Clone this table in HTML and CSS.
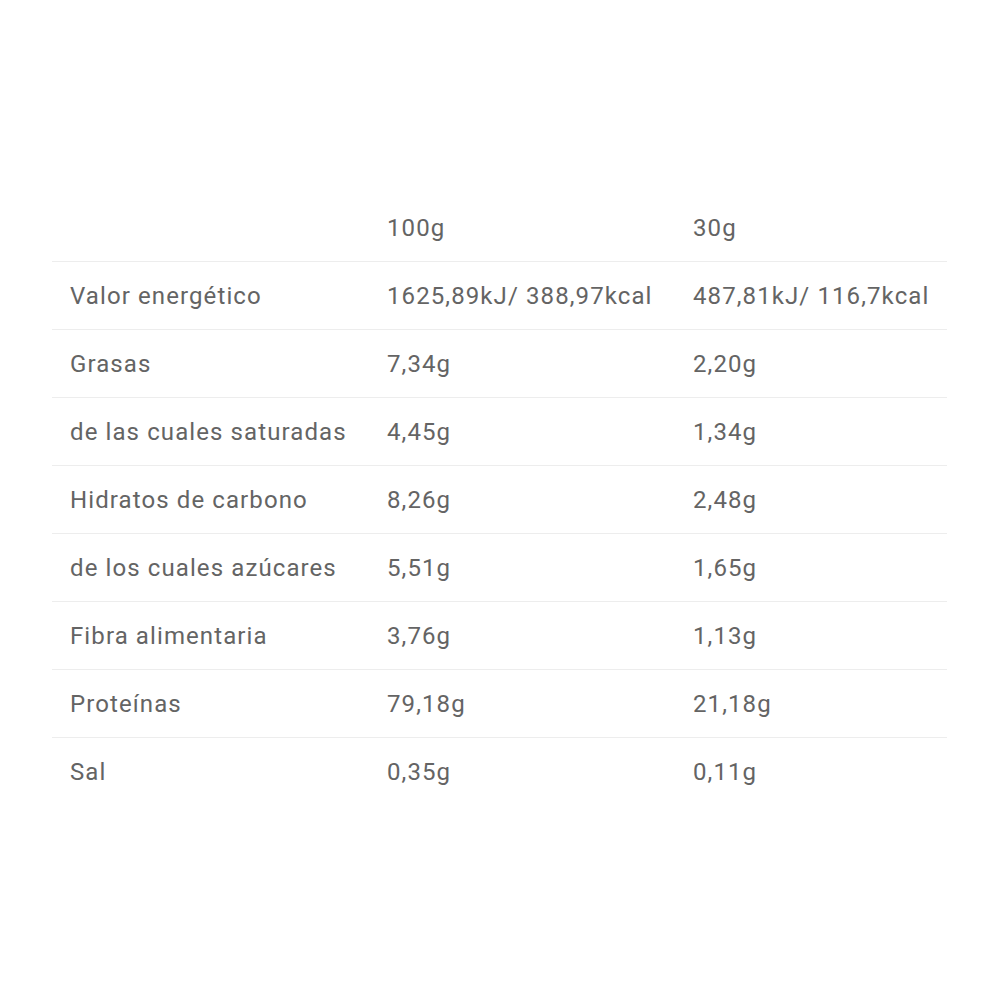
FILE: index.html
```html
<!DOCTYPE html>
<html lang="es">
<head>
<meta charset="utf-8">
<link rel="stylesheet" href="styles.css">
</head>
<body>
<div class="page">
  <div class="table">
    <div class="row head"><div class="c"></div><div class="c">100g</div><div class="c">30g</div></div>
    <div class="row"><div class="c">Valor energético</div><div class="c">1625,89kJ/ 388,97kcal</div><div class="c">487,81kJ/ 116,7kcal</div></div>
    <div class="row"><div class="c">Grasas</div><div class="c">7,34g</div><div class="c">2,20g</div></div>
    <div class="row"><div class="c">de las cuales saturadas</div><div class="c">4,45g</div><div class="c">1,34g</div></div>
    <div class="row"><div class="c">Hidratos de carbono</div><div class="c">8,26g</div><div class="c">2,48g</div></div>
    <div class="row"><div class="c">de los cuales azúcares</div><div class="c">5,51g</div><div class="c">1,65g</div></div>
    <div class="row"><div class="c">Fibra alimentaria</div><div class="c">3,76g</div><div class="c">1,13g</div></div>
    <div class="row"><div class="c">Proteínas</div><div class="c">79,18g</div><div class="c">21,18g</div></div>
    <div class="row last"><div class="c">Sal</div><div class="c">0,35g</div><div class="c">0,11g</div></div>
  </div>
</div>
</body>
</html>
```
FILE: styles.css
```css
html, body { margin: 0; padding: 0; background: #fff; }
.page { width: 1000px; height: 1000px; padding-top: 194px; box-sizing: border-box; }
.table { margin-left: 52px; width: 895px; font-family: Roboto, "Noto Sans", sans-serif; font-size: 24px; color: #646464; letter-spacing: 1.1px; }
.row { display: grid; grid-template-columns: 317px 306px 272px; height: 68px; align-items: center; border-bottom: 1px solid #ededed; box-sizing: border-box; }
.row.last { border-bottom: none; }
.c { padding-left: 18px; white-space: nowrap; }
```
